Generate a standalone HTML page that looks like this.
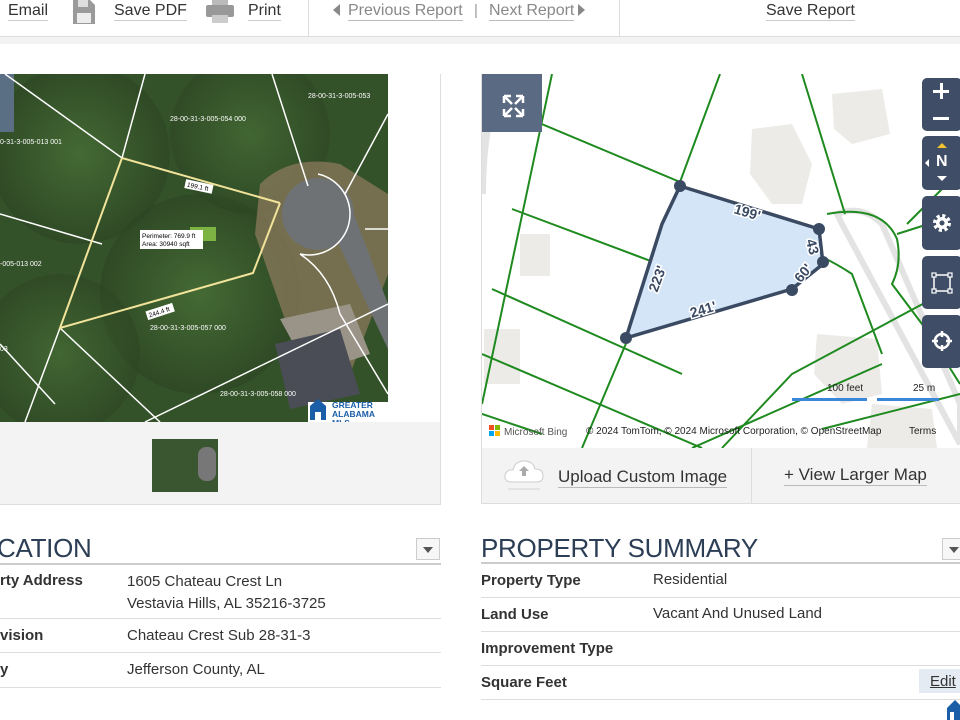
<!DOCTYPE html>
<html><head><meta charset="utf-8"><style>
*{margin:0;padding:0;box-sizing:border-box}
body{width:960px;height:720px;overflow:hidden;background:#fff;font-family:"Liberation Sans",sans-serif;position:relative;color:#333}
.a{position:absolute}
.tb{font-size:16px;color:#333;border-bottom:1px solid #ccc;line-height:18px}
.lnk{font-size:16px;color:#888;border-bottom:1px solid #bbb;line-height:18px}
.row{position:absolute;border-bottom:1px solid #ddd;font-size:15px}
.lb{font-weight:bold;color:#333}
.ctl{position:absolute;left:922px;width:40px;background:#3f4e66;border-radius:5px;color:#fff}
</style></head><body>
<div class="a tb" style="left:8px;top:2px">Email</div>
<svg class="a" style="left:72px;top:0" width="24" height="24" viewBox="0 0 24 24"><path d="M1 0h17l5 5v19H1z" fill="#9a9a9a"/><rect x="6" y="0" width="10" height="7" fill="#ddd"/><rect x="5" y="13" width="14" height="10" fill="#ececec"/></svg>
<div class="a tb" style="left:114px;top:2px">Save PDF</div>
<svg class="a" style="left:206px;top:0" width="28" height="24" viewBox="0 0 28 24"><rect x="6" y="0" width="16" height="5" fill="#bbb"/><rect x="0" y="5" width="28" height="12" rx="2" fill="#999"/><rect x="6" y="15" width="16" height="8" fill="#ccc"/></svg>
<div class="a tb" style="left:248px;top:2px">Print</div>
<div class="a" style="left:308px;top:0;width:1px;height:36px;background:#ddd"></div>
<div class="a" style="left:333px;top:4px;width:0;height:0;border-top:6px solid transparent;border-bottom:6px solid transparent;border-right:7px solid #888"></div>
<div class="a lnk" style="left:348px;top:2px">Previous Report</div>
<div class="a" style="left:474px;top:2px;color:#999;font-size:15px">|</div>
<div class="a lnk" style="left:489px;top:2px">Next Report</div>
<div class="a" style="left:578px;top:4px;width:0;height:0;border-top:6px solid transparent;border-bottom:6px solid transparent;border-left:7px solid #888"></div>
<div class="a" style="left:619px;top:0;width:1px;height:36px;background:#ddd"></div>
<div class="a tb" style="left:766px;top:2px">Save Report</div>
<div class="a" style="left:0;top:36px;width:960px;height:8px;background:#f3f3f3;border-top:1px solid #ddd"></div>

<div class="a" style="left:-2px;top:74px;width:443px;height:431px;border:1px solid #ddd;background:#f3f3f3"></div>
<div class="a" style="left:388px;top:74px;width:52px;height:348px;background:#fff"></div>
<svg class="a" style="left:0;top:74px" width="388" height="348" viewBox="0 0 388 348">
<defs><radialGradient id="g1" cx="50%" cy="50%" r="50%"><stop offset="0" stop-color="#4f7a3a"/><stop offset="1" stop-color="#2b4322"/></radialGradient></defs>
<rect width="388" height="348" fill="#34522a"/>
<circle cx="80" cy="80" r="90" fill="url(#g1)" opacity=".6"/>
<circle cx="200" cy="220" r="100" fill="url(#g1)" opacity=".6"/>
<circle cx="60" cy="280" r="80" fill="url(#g1)" opacity=".5"/>
<circle cx="250" cy="60" r="80" fill="url(#g1)" opacity=".5"/>
<rect x="0" y="0" width="14" height="58" fill="#5a6e84"/>
<path d="M260 110 Q290 80 340 90 L388 120 L388 200 L350 300 L290 260 L255 160Z" fill="#8b7a5c" opacity=".75"/>
<path d="M280 245 L350 230 L370 280 L310 300Z" fill="#9a9488"/>
<path d="M275 270 L340 255 L360 320 L290 335Z" fill="#4a4d55"/>
<circle cx="318" cy="140" r="36" fill="#6f7274"/>
<path d="M315 120 L350 130 L388 230 L388 275 Z" fill="#6f7274"/>
<g stroke="#fff" stroke-width="1.5" fill="none">
<path d="M5 0 L122 84 M145 0 L122 84 M272 0 L308 112 M388 40 L345 120 M0 140 L102 170 M55 330 L0 270 M60 254 L25 348 M60 254 L160 348 M145 348 L388 230 M318 100 A40 40 0 1 1 300 180 Q330 200 340 240 L388 320 M365 155 L388 155"/>
</g>
<g stroke="#f1e39a" stroke-width="2" fill="none"><path d="M122 84 L280 129 M122 84 L60 254 L253 199 L280 129"/></g>
<g font-size="7" fill="#fff"><text x="25" y="0">28-00-31-3-005-052 000</text><text x="170" y="47">28-00-31-3-005-054 000</text><text x="308" y="24">28-00-31-3-005-053</text><text x="0" y="70">0-31-3-005-013 001</text><text x="0" y="192">-005-013 002</text><text x="150" y="256">28-00-31-3-005-057 000</text><text x="220" y="322">28-00-31-3-005-058 000</text><text x="0" y="277">03</text></g>
<rect x="190" y="153" width="26" height="14" fill="#7cb342"/>
<rect x="140" y="156" width="63" height="19" fill="#fff"/>
<text x="142" y="164" font-size="6.5" fill="#000">Perimeter: 769.9 ft</text><text x="142" y="172" font-size="6.5" fill="#000">Area: 30940 sqft</text>
<rect x="185" y="108" width="28" height="9" fill="#fff" transform="rotate(12 199 112)"/><text x="187" y="115" font-size="6.5" fill="#000" transform="rotate(12 199 112)">199.1 ft</text>
<rect x="146" y="233" width="28" height="9" fill="#fff" transform="rotate(-18 160 237)"/><text x="148" y="240" font-size="6.5" fill="#000" transform="rotate(-18 160 237)">244.4 ft</text>
<rect x="308" y="328" width="80" height="20" fill="#fff"/>
<path d="M310 332 L318 325 L326 332 V346 H310Z" fill="#1a5ea8"/><rect x="315" y="338" width="6" height="8" fill="#fff"/>
<text x="332" y="334" font-size="8.5" font-weight="bold" fill="#1a5ea8">GREATER</text><text x="332" y="343" font-size="8.5" font-weight="bold" fill="#1a5ea8">ALABAMA</text><text x="332" y="352" font-size="8.5" font-weight="bold" fill="#1a5ea8">MLS</text>
</svg>
<div class="a" style="left:152px;top:439px;width:66px;height:53px;background:#3a5630"><div class="a" style="left:46px;top:8px;width:18px;height:34px;background:#777;border-radius:8px"></div></div>

<div class="a" style="left:481px;top:74px;width:480px;height:430px;border:1px solid #ddd;background:#f3f3f3"></div>
<svg class="a" style="left:482px;top:74px" width="478" height="374" viewBox="0 0 478 374">
<rect width="478" height="374" fill="#fff"/>
<g fill="#ecebe8"><path d="M270 55 L310 50 L330 90 L320 130 L290 130 L268 100Z"/><path d="M350 20 L400 15 L408 60 L370 70 L352 55Z"/><rect x="38" y="160" width="30" height="42"/><rect x="2" y="255" width="36" height="55"/><path d="M335 260 L395 265 L400 320 L360 330 L332 300Z"/><path d="M390 330 L450 335 L455 374 L385 374Z"/></g>
<path d="M355 140 Q380 130 400 150 L478 330 L478 370 L360 150Z" fill="none" stroke="#e3e3e3" stroke-width="6"/>
<path d="M20 0 Q0 50 0 120" stroke="#e3e3e3" stroke-width="8" fill="none"/>
<g stroke="#1f8a1f" stroke-width="2" fill="none">
<path d="M0 25 L198 108 M70 0 L0 330 M238 0 L198 108 M320 0 L363 140 M30 135 L190 195 M10 215 L200 300 M0 280 L220 374 M148 260 L100 374 M340 355 L478 320 M210 374 L400 290 M240 374 L310 300 L478 210 M60 360 L0 340 M345 140 Q400 130 415 165 Q420 190 410 210 L440 250 L478 310 M415 160 L478 140 M340 183 Q355 190 370 200 L400 280 M425 150 L465 110"/>
</g>
<path d="M198 112 L337 155 L341 190 L310 215 L144 264 L180 150 Z" fill="#d4e5f7" stroke="#3b4a63" stroke-width="3.5" stroke-linejoin="round"/>
<g fill="#3b4a63"><circle cx="198" cy="112" r="6"/><circle cx="337" cy="155" r="6"/><circle cx="341" cy="188" r="6"/><circle cx="310" cy="216" r="6"/><circle cx="144" cy="264" r="6"/></g>
<g font-size="14" font-weight="bold" fill="#3b4a63" stroke="#fff" stroke-width="3" paint-order="stroke">
<text x="252" y="143" transform="rotate(17 265 138)">199'</text><text x="325" y="175" transform="rotate(75 330 170)">43</text><text x="312" y="205" transform="rotate(-50 320 200)">60'</text><text x="208" y="240" transform="rotate(-17 222 236)">241'</text><text x="162" y="210" transform="rotate(-70 175 205)">223'</text></g>
<rect x="310" y="324" width="75" height="3" fill="#3a86d8"/><rect x="395" y="324" width="62" height="3" fill="#3a86d8"/>
<text x="345" y="317" font-size="10" fill="#222">100 feet</text><text x="431" y="317" font-size="10" fill="#222">25 m</text>
<rect x="7" y="351" width="5" height="5" fill="#f25022"/><rect x="13" y="351" width="5" height="5" fill="#7fba00"/><rect x="7" y="357" width="5" height="5" fill="#00a4ef"/><rect x="13" y="357" width="5" height="5" fill="#ffb900"/>
<text x="22" y="361" font-size="10" fill="#555">Microsoft Bing</text>
<text x="104" y="360" font-size="10" fill="#222">© 2024 TomTom, © 2024 Microsoft Corporation, © OpenStreetMap</text><text x="427" y="360" font-size="10" fill="#222">Terms</text>
<rect x="0" y="0" width="60" height="58" fill="#5a6a82"/>
<g stroke="#fff" stroke-width="2.5" fill="none"><path d="M22 22 L30 30 M22 22 h7 M22 22 v7 M41 22 L33 30 M41 22 h-7 M41 22 v7 M22 42 L30 34 M22 42 h7 M22 42 v-7 M41 42 L33 34 M41 42 h-7 M41 42 v-7"/></g>
</svg>
<div class="ctl" style="top:78px;height:53px"><div class="a" style="left:11px;top:12px;width:16px;height:2.5px;background:#fff"></div><div class="a" style="left:18px;top:5px;width:2.5px;height:16px;background:#fff"></div><div class="a" style="left:11px;top:39px;width:16px;height:2.5px;background:#fff"></div></div>
<div class="ctl" style="top:136px;height:54px"><div class="a" style="left:15px;top:7px;border-left:5px solid transparent;border-right:5px solid transparent;border-bottom:5px solid #f3c430"></div><div class="a" style="left:14px;top:17px;font-weight:bold;font-size:16px">N</div><div class="a" style="left:15px;top:40px;border-left:5px solid transparent;border-right:5px solid transparent;border-top:5px solid #fff"></div><div class="a" style="left:3px;top:23px;border-top:4px solid transparent;border-bottom:4px solid transparent;border-right:4px solid #fff"></div></div>
<div class="ctl" style="top:196px;height:54px"><svg class="a" style="left:9px;top:16px" width="22" height="22" viewBox="0 0 22 22"><circle cx="11" cy="11" r="7" fill="none" stroke="#fff" stroke-width="4" stroke-dasharray="3 2.5"/><circle cx="11" cy="11" r="6" fill="#fff"/><circle cx="11" cy="11" r="2.5" fill="#3f4e66"/></svg></div>
<div class="ctl" style="top:256px;height:53px"><svg class="a" style="left:9px;top:16px" width="22" height="22" viewBox="0 0 22 22"><rect x="3" y="3" width="16" height="16" fill="none" stroke="#fff" stroke-width="1.5"/><g fill="#3f4e66" stroke="#fff" stroke-width="1.2"><rect x="1" y="1" width="4" height="4"/><rect x="17" y="1" width="4" height="4"/><rect x="1" y="17" width="4" height="4"/><rect x="17" y="17" width="4" height="4"/></g></svg></div>
<div class="ctl" style="top:315px;height:53px"><svg class="a" style="left:9px;top:15px" width="22" height="22" viewBox="0 0 22 22"><circle cx="11" cy="11" r="7" fill="none" stroke="#fff" stroke-width="2.5"/><path d="M11 1v6M11 15v6M1 11h6M15 11h6" stroke="#fff" stroke-width="2.5"/></svg></div>
<div class="a" style="left:751px;top:448px;width:1px;height:55px;background:#ddd"></div>
<svg class="a" style="left:504px;top:458px" width="40" height="34" viewBox="0 0 40 34"><path d="M8 24 Q0 24 1 17 Q3 11 9 12 Q11 3 20 3 Q29 3 31 11 Q39 11 39 18 Q39 24 32 24Z" fill="#fff" stroke="#ccc"/><path d="M20 8 l-5 5h3v5h4v-5h3z" fill="#aaa"/><rect x="4" y="30" width="32" height="2" fill="#e3e3e3"/></svg>
<div class="a" style="left:558px;top:467px;font-size:17px;color:#333;border-bottom:1px solid #bbb;line-height:20px">Upload Custom Image</div>
<div class="a" style="left:784px;top:465px;font-size:17px;color:#333;border-bottom:1px solid #bbb;line-height:20px">+ View Larger Map</div>

<div class="a" style="left:-3px;top:533px;font-size:26px;color:#2c3e55;letter-spacing:-0.3px">CATION</div>
<div class="a" style="left:416px;top:538px;width:24px;height:22px;border:1px solid #ccc;background:#f7f7f7"><div class="a" style="left:6px;top:8px;border-left:5px solid transparent;border-right:5px solid transparent;border-top:6px solid #555"></div></div>
<div class="a" style="left:0;top:563px;width:441px;height:2px;background:#ccc"></div>
<div class="row" style="left:0;top:565px;width:441px;height:54px"><span class="a lb" style="left:0;top:7px">rty Address</span><span class="a" style="left:127px;top:6px;line-height:22px">1605 Chateau Crest Ln<br>Vestavia Hills, AL 35216-3725</span></div>
<div class="row" style="left:0;top:619px;width:441px;height:34px"><span class="a lb" style="left:0;top:8px">vision</span><span class="a" style="left:127px;top:8px">Chateau Crest Sub 28-31-3</span></div>
<div class="row" style="left:0;top:653px;width:441px;height:35px"><span class="a lb" style="left:0;top:8px">y</span><span class="a" style="left:127px;top:8px">Jefferson County, AL</span></div>

<div class="a" style="left:481px;top:533px;font-size:26px;color:#2c3e55;letter-spacing:-0.3px">PROPERTY SUMMARY</div>
<div class="a" style="left:942px;top:538px;width:24px;height:22px;border:1px solid #ccc;background:#f7f7f7"><div class="a" style="left:6px;top:8px;border-left:5px solid transparent;border-right:5px solid transparent;border-top:6px solid #555"></div></div>
<div class="a" style="left:481px;top:562px;width:479px;height:2px;background:#ccc"></div>
<div class="row" style="left:481px;top:564px;width:479px;height:34px"><span class="a lb" style="left:0;top:8px">Property Type</span><span class="a" style="left:172px;top:7px">Residential</span></div>
<div class="row" style="left:481px;top:598px;width:479px;height:34px"><span class="a lb" style="left:0;top:8px">Land Use</span><span class="a" style="left:172px;top:7px">Vacant And Unused Land</span></div>
<div class="row" style="left:481px;top:632px;width:479px;height:34px"><span class="a lb" style="left:0;top:8px">Improvement Type</span></div>
<div class="row" style="left:481px;top:666px;width:479px;height:34px"><span class="a lb" style="left:0;top:8px">Square Feet</span><span class="a" style="left:438px;top:3px;width:45px;height:24px;background:#e4ebf3;padding:4px 0 0 11px;text-decoration:underline">Edit</span></div>
<svg class="a" style="left:947px;top:700px" width="13" height="20"><path d="M0 8 L8 0 L13 5 V20 H0Z" fill="#1a5ea8"/><rect x="3" y="12" width="4" height="8" fill="#fff"/></svg>
</body></html>
